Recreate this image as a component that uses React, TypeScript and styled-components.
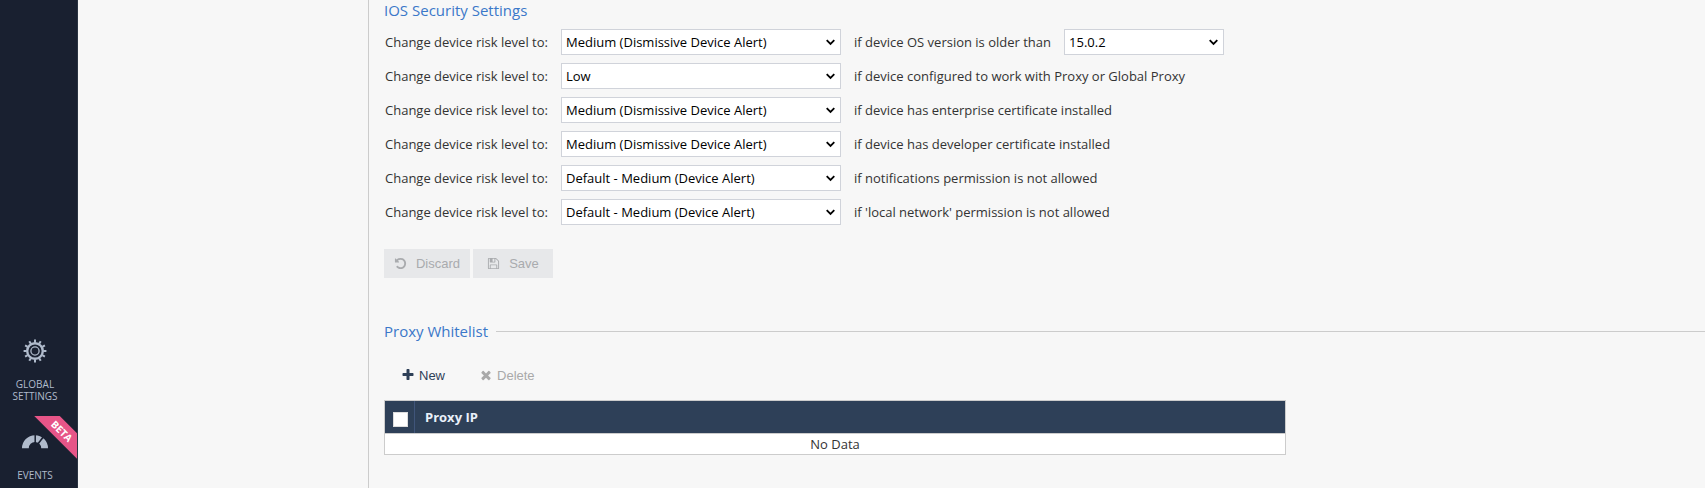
import React from 'react';
import styled, { createGlobalStyle } from 'styled-components';

const GlobalStyle = createGlobalStyle`
  * { box-sizing: border-box; }
  body {
    margin: 0;
    background: #f7f7f7;
    color: #333;
    font-family: 'Open Sans', 'Liberation Sans', sans-serif;
    font-size: 13px;
    overflow: hidden;
  }
`;

const Page = styled.div`
  display: flex;
  height: 488px;
`;

const Sidebar = styled.nav`
  display: flex;
  flex-direction: column;
  justify-content: flex-end;
  width: 78px;
  border-right: 1px solid #2a3442;
  background: #192030;
`;

const NavItem = styled.a<{ $height: number; $gap: number; $top?: number }>`
  position: relative;
  display: flex;
  flex-direction: column;
  align-items: center;
  gap: ${(p) => p.$gap}px;
  height: ${(p) => p.$height}px;
  padding: ${(p) => p.$top ?? 0}px 7px 0 0;
  overflow: hidden;
  color: #b0bbcc;
  font-size: 10px;
  line-height: 12px;
  text-align: center;
  svg { display: block; flex: none; }
`;

const Ribbon = styled.span`
  position: absolute;
  top: 6px;
  left: 22px;
  width: 80px;
  height: 18px;
  transform: rotate(45deg);
  background: #e75588;
  color: #fff;
  font-size: 10px;
  font-weight: 700;
  line-height: 18px;
  text-align: center;
`;

const SubPanel = styled.aside`
  width: 291px;
  border-right: 1px solid #ccc;
`;

const Content = styled.main`
  flex: 1;
  display: flex;
  flex-direction: column;
  align-items: flex-start;
  padding-left: 15px;
`;

const Title = styled.h2`
  margin: 0;
  color: #3b78c9;
  font-size: 15px;
  font-weight: 400;
  line-height: 20px;
`;

const Rules = styled.div`
  display: flex;
  flex-direction: column;
  gap: 8px;
  padding: 9px 0 0 1px;
`;

const Rule = styled.div`
  display: flex;
  align-items: center;
  height: 26px;
`;

const RuleLabel = styled.span`
  width: 176px;
`;

const RuleText = styled.span`
  padding: 0 13px;
`;

const Select = styled.div<{ $width: number }>`
  display: flex;
  align-items: center;
  justify-content: space-between;
  width: ${(p) => p.$width}px;
  height: 26px;
  padding: 0 5px 0 4px;
  border: 1px solid #d0d3da;
  background: #fff;
  color: #000;
`;

const Actions = styled.div`
  display: flex;
  gap: 3px;
  margin-top: 24px;
`;

const Button = styled.button<{ $width: number }>`
  display: flex;
  align-items: center;
  justify-content: center;
  gap: 9px;
  width: ${(p) => p.$width}px;
  height: 29px;
  padding: 0;
  border: 0;
  background: #e7e8ea;
  color: #a9abae;
  font: 13px 'Liberation Sans', Arial, sans-serif;
`;

const SectionHead = styled.div`
  display: flex;
  align-items: center;
  gap: 8px;
  width: 100%;
  margin-top: 43px;
`;

const Line = styled.div`
  flex: 1;
  height: 1px;
  background: #ccc;
`;

const Toolbar = styled.div`
  display: flex;
  gap: 34px;
  margin: 24px 0 15px 17px;
`;

const Tool = styled.button<{ $disabled?: boolean }>`
  display: flex;
  align-items: center;
  gap: 4px;
  height: 20px;
  padding: 0;
  border: 0;
  background: none;
  color: ${(p) => (p.$disabled ? '#a9a9a9' : '#2e4058')};
  font: 13px 'Liberation Sans', Arial, sans-serif;
`;

const Table = styled.div`
  width: 902px;
  border: 1px solid #ccc;
  background: #fff;
`;

const HeadRow = styled.div`
  display: flex;
  height: 33px;
  border-bottom: 1px solid #ccc;
  background: #2e4058;
  color: #e9f0fa;
  font-weight: 700;
`;

const CheckCell = styled.div`
  width: 30px;
  padding: 11px 0 0 8px;
  border-right: 1px solid #40557a;
`;

const Check = styled.div`
  width: 15px;
  height: 15px;
  border: 1px solid #ddd;
  background: #fff;
`;

const HeadCell = styled.div`
  padding-left: 10px;
  line-height: 32px;
`;

const Empty = styled.div`
  height: 20px;
  line-height: 20px;
  text-align: center;
`;

const paths = {
  undo: 'M1664 896q0 156-61 298t-164 245-245 164-298 61q-172 0-327-72.5t-264-204.5q-7-10-6.5-22.5t8.5-20.5l137-138q10-9 25-9 16 2 23 12 73 95 179 147t225 52q104 0 198.5-40.5t163.5-109.5 109.5-163.5 40.5-198.5-40.5-198.5-109.5-163.5-163.5-109.5-198.5-40.5q-98 0-188 35.5t-160 101.5l137 138q31 30 14 69-17 40-59 40h-448q-26 0-45-19t-19-45v-448q0-42 40-59 39-17 69 14l130 129q107-101 244.5-156.5t284.5-55.5q156 0 298 61t245 164 164 245 61 298z',
  save: 'M512 1536h768v-384h-768v384zm896 0h128v-896q0-14-10-38.5t-20-34.5l-281-281q-10-10-34-20t-39-10v416q0 40-28 68t-68 28h-576q-40 0-68-28t-28-68v-416h-128v1280h128v-416q0-40 28-68t68-28h832q40 0 68 28t28 68v416zm-384-928v-320q0-13-9.5-22.5t-22.5-9.5h-192q-13 0-22.5 9.5t-9.5 22.5v320q0 13 9.5 22.5t22.5 9.5h192q13 0 22.5-9.5t9.5-22.5zm640 32v928q0 40-28 68t-68 28h-1344q-40 0-68-28t-28-68v-1344q0-40 28-68t68-28h928q40 0 88 20t76 48l280 280q28 28 48 76t20 88z',
  plus: 'M1600 736v192q0 40-28 68t-68 28h-416v416q0 40-28 68t-68 28h-192q-40 0-68-28t-28-68v-416h-416q-40 0-68-28t-28-68v-192q0-40 28-68t68-28h416v-416q0-40 28-68t68-28h192q40 0 68 28t28 68v416h416q40 0 68 28t28 68z',
  times: 'M1490 1322q0 40-28 68l-136 136q-28 28-68 28t-68-28l-294-294-294 294q-28 28-68 28t-68-28l-136-136q-28-28-28-68t28-68l294-294-294-294q-28-28-28-68t28-68l136-136q28-28 68-28t68 28l294 294 294-294q28-28 68-28t68 28l136 136q28 28 28 68t-28 68l-294 294 294 294q28 28 28 68z',
};

const Icon = ({ name, size = 14 }: { name: keyof typeof paths; size?: number }) => (
  <svg width={size} height={size} viewBox="0 0 1792 1792" fill="currentColor">
    <path d={paths[name]} />
  </svg>
);

const Chevron = () => (
  <svg width="9" height="7" viewBox="0 0 9 7" fill="none" stroke="#000" strokeWidth="1.8">
    <path d="M0.7 1.2 4.5 5 8.3 1.2" />
  </svg>
);

const Gear = () => (
  <svg width="24" height="24" viewBox="0 0 24 24" fill="none" stroke="currentColor">
    <circle cx="12" cy="12" r="7.8" strokeWidth="2.4" />
    <circle cx="12" cy="12" r="4.1" strokeWidth="1.3" />
    {Array.from({ length: 12 }, (_, i) => (
      <path key={i} d="M12 0.6V3.6" strokeWidth="2" transform={`rotate(${i * 30} 12 12)`} />
    ))}
  </svg>
);

const Gauge = () => (
  <svg width="26" height="14" viewBox="0 0 26 14" fill="none">
    <path d="M3.4 13.2A9.6 9.6 0 0 1 22.6 13.2" stroke="currentColor" strokeWidth="6.8" />
    <path d="M13.2 0V8" stroke="#192030" strokeWidth="1.5" />
    <path d="M22 1 15.5 9.5" stroke="#192030" strokeWidth="1.6" />
  </svg>
);

const rules = [
  { value: 'Medium (Dismissive Device Alert)', text: 'if device OS version is older than', version: '15.0.2' },
  { value: 'Low', text: 'if device configured to work with Proxy or Global Proxy' },
  { value: 'Medium (Dismissive Device Alert)', text: 'if device has enterprise certificate installed' },
  { value: 'Medium (Dismissive Device Alert)', text: 'if device has developer certificate installed' },
  { value: 'Default - Medium (Device Alert)', text: 'if notifications permission is not allowed' },
  { value: 'Default - Medium (Device Alert)', text: "if 'local network' permission is not allowed" },
];

export default function App() {
  return (
    <Page>
      <GlobalStyle />
      <Sidebar>
        <NavItem $height={77} $gap={15}>
          <Gear />
          <span>GLOBAL<br />SETTINGS</span>
        </NavItem>
        <NavItem $height={72} $gap={20} $top={19}>
          <Gauge />
          <span>EVENTS</span>
          <Ribbon>BETA</Ribbon>
        </NavItem>
      </Sidebar>
      <SubPanel />
      <Content>
        <Title>IOS Security Settings</Title>
        <Rules>
          {rules.map((r) => (
            <Rule key={r.text}>
              <RuleLabel>Change device risk level to:</RuleLabel>
              <Select $width={280}>{r.value}<Chevron /></Select>
              <RuleText>{r.text}</RuleText>
              {r.version && <Select $width={160}>{r.version}<Chevron /></Select>}
            </Rule>
          ))}
        </Rules>
        <Actions>
          <Button $width={86} disabled><Icon name="undo" size={13} />Discard</Button>
          <Button $width={80} disabled><Icon name="save" size={13} />Save</Button>
        </Actions>
        <SectionHead>
          <Title>Proxy Whitelist</Title>
          <Line />
        </SectionHead>
        <Toolbar>
          <Tool><Icon name="plus" />New</Tool>
          <Tool $disabled disabled><Icon name="times" />Delete</Tool>
        </Toolbar>
        <Table>
          <HeadRow>
            <CheckCell><Check /></CheckCell>
            <HeadCell>Proxy IP</HeadCell>
          </HeadRow>
          <Empty>No Data</Empty>
        </Table>
      </Content>
    </Page>
  );
}
